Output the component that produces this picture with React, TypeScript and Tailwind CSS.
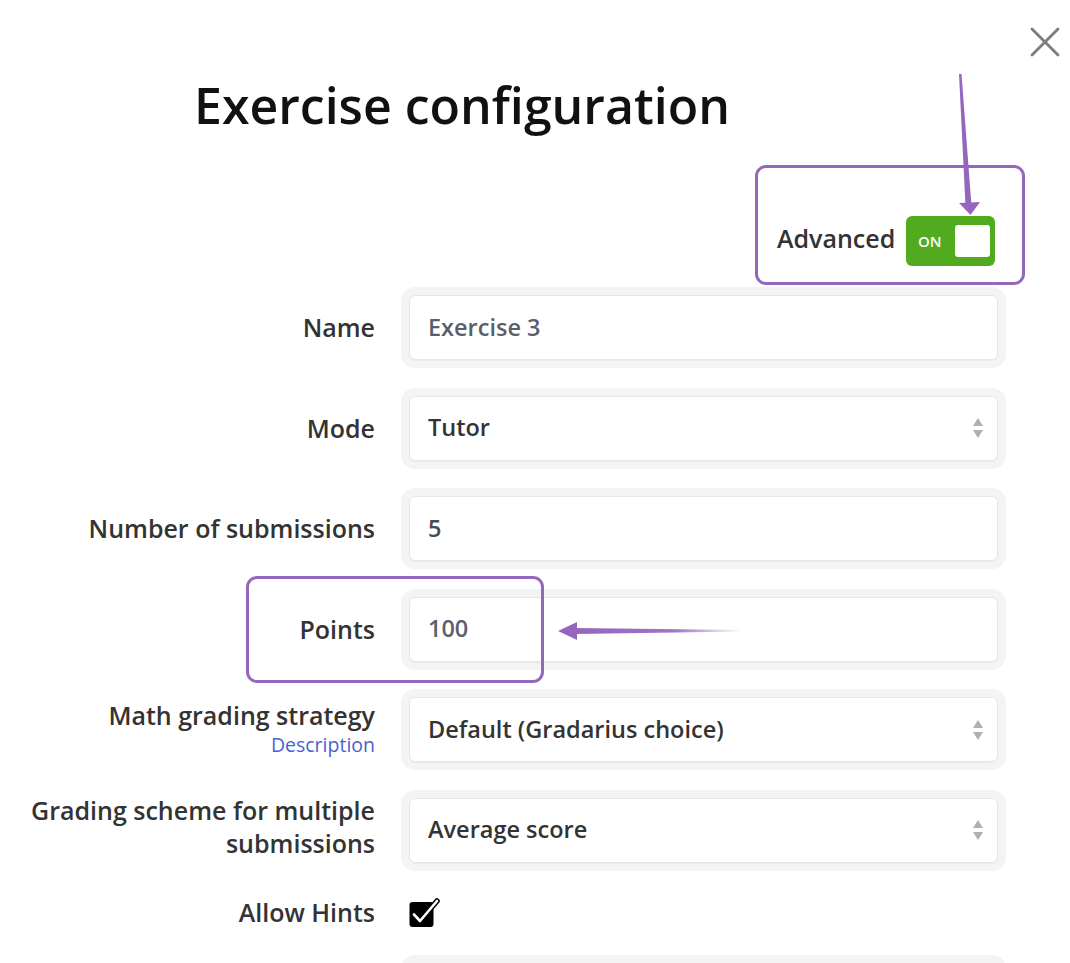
import React from "react";

const PURPLE = "#9466bd";

function SelectArrows() {
  return (
    <svg width="14" height="26" viewBox="0 0 14 26" className="shrink-0">
      <polygon points="7,3 12,11 2,11" fill="#b0b0b0" />
      <polygon points="2,15 12,15 7,23" fill="#b0b0b0" />
    </svg>
  );
}

function Field({
  value,
  color,
  select,
}: {
  value: string;
  color: string;
  select?: boolean;
}) {
  return (
    <div className="w-[605px] rounded-[14px] bg-[#f4f4f4] p-[8px]">
      <div className="flex h-[65px] items-center justify-between rounded-[6px] border border-[#e6e6e6] bg-white pl-[18px] pr-[12px] shadow-[0_1px_1px_rgba(0,0,0,0.04)]">
        <span className="text-[23.5px] font-semibold" style={{ color }}>
          {value}
        </span>
        {select ? <SelectArrows /> : null}
      </div>
    </div>
  );
}

function Row({
  label,
  children,
  sub,
  extra,
  labelClass,
}: {
  label: React.ReactNode;
  children: React.ReactNode;
  sub?: React.ReactNode;
  extra?: React.ReactNode;
  labelClass?: string;
}) {
  return (
    <div className="relative flex items-center">
      <div className={"flex w-[375px] shrink-0 flex-col items-end text-right " + (labelClass ?? "")}>
        <div className="text-[25px] font-semibold leading-[33px] text-[#333]">{label}</div>
        {sub}
      </div>
      <div className="ml-[26px]">{children}</div>
      {extra}
    </div>
  );
}

export default function App() {
  return (
    <div
      className="relative h-[963px] w-[1070px] overflow-hidden bg-white"
      style={{ fontFamily: '"Open Sans", "Noto Sans", sans-serif' }}
    >
      {/* Close button */}
      <button className="absolute left-[1028px] top-[25px] flex h-[34px] w-[34px] items-center justify-center">
        <svg width="32" height="32" viewBox="0 0 32 32">
          <line x1="3" y1="3" x2="29" y2="29" stroke="#7d7d7d" strokeWidth="2.8" strokeLinecap="round" />
          <line x1="29" y1="3" x2="3" y2="29" stroke="#7d7d7d" strokeWidth="2.8" strokeLinecap="round" />
        </svg>
      </button>

      <h1 className="pl-[194px] pt-[80px] text-[50px] font-semibold leading-none text-[#111]">
        Exercise configuration
      </h1>

      {/* Advanced */}
      <div className="mt-[35px] flex justify-end pr-[45px]">
        <div
          className="flex h-[120px] w-[270px] items-start justify-between rounded-[11px] border-[3px] pl-[19px] pr-[27px] pt-[48px]"
          style={{ borderColor: PURPLE }}
        >
          <span className="mt-[5px] text-[25px] font-semibold leading-[34px] text-[#333]">Advanced</span>
          <div className="flex h-[50px] w-[89px] items-center justify-between rounded-[6px] bg-[#52ab1f] pl-[12px] pr-[5px]">
            <span className="text-[15px] font-semibold text-white">ON</span>
            <div className="h-[32px] w-[35px] rounded-[3px] bg-white" />
          </div>
        </div>
      </div>

      <div className="mt-[2px] flex flex-col gap-[19.5px]">
        <Row label="Name">
          <Field value="Exercise 3" color="#5b5f6c" />
        </Row>
        <Row label="Mode">
          <Field value="Tutor" color="#333" select />
        </Row>
        <Row label="Number of submissions">
          <Field value="5" color="#4a4a52" />
        </Row>
        <Row
          label="Points"
          extra={
            <div
              className="pointer-events-none absolute left-[246px] top-[-13px] h-[107px] w-[298px] rounded-[11px] border-[3px]"
              style={{ borderColor: PURPLE }}
            />
          }
        >
          <Field value="100" color="#5b5f6c" />
        </Row>
        <Row
          label={<span className="block leading-[30px]">Math grading strategy</span>}
          labelClass="pb-[3px]"
          sub={<span className="mt-[3px] text-[19.5px] leading-[24px] text-[#4b5fd6]">Description</span>}
        >
          <Field value="Default (Gradarius choice)" color="#333" select />
        </Row>
        <Row
          labelClass="pb-[6px]"
          label={
            <>
              Grading scheme for multiple
              <br />
              submissions
            </>
          }
        >
          <Field value="Average score" color="#333" select />
        </Row>
        <Row label="Allow Hints">
          <div className="flex h-[45px] items-center pl-[8px]">
            <svg width="36" height="30" viewBox="0 0 36 30">
              <rect x="0.5" y="4" width="24" height="25" rx="3" fill="#000" />
              <path d="M5 16.5 L11 23 L28 3" fill="none" stroke="#000" strokeWidth="5.5" strokeLinecap="round" strokeLinejoin="round" />
              <path d="M5 16.5 L11 23 L28 3" fill="none" stroke="#fff" strokeWidth="2.6" strokeLinecap="round" strokeLinejoin="round" />
            </svg>
          </div>
        </Row>
        <div className="ml-[401px] w-[605px] rounded-[14px] bg-[#f4f4f4] p-[8px]">
          <div className="h-[65px] rounded-[6px] border border-[#e6e6e6] bg-white" />
        </div>
      </div>

      {/* Annotation arrows */}
      <svg className="pointer-events-none absolute left-0 top-0" width="1070" height="963">
        <defs>
          <linearGradient id="fadeR" x1="0" y1="0" x2="1" y2="0">
            <stop offset="0" stopColor={PURPLE} stopOpacity="1" />
            <stop offset="0.6" stopColor={PURPLE} stopOpacity="0.9" />
            <stop offset="1" stopColor={PURPLE} stopOpacity="0" />
          </linearGradient>
        </defs>
        <polygon points="959,74 961.5,74 971.5,206 965.5,206" fill={PURPLE} />
        <polygon points="959,203 980,202 970.5,215" fill={PURPLE} />
        <polygon points="575,628 742,630 742,631.5 575,634" fill="url(#fadeR)" />
        <polygon points="577,622 577,640 558,631" fill={PURPLE} />
      </svg>
    </div>
  );
}
